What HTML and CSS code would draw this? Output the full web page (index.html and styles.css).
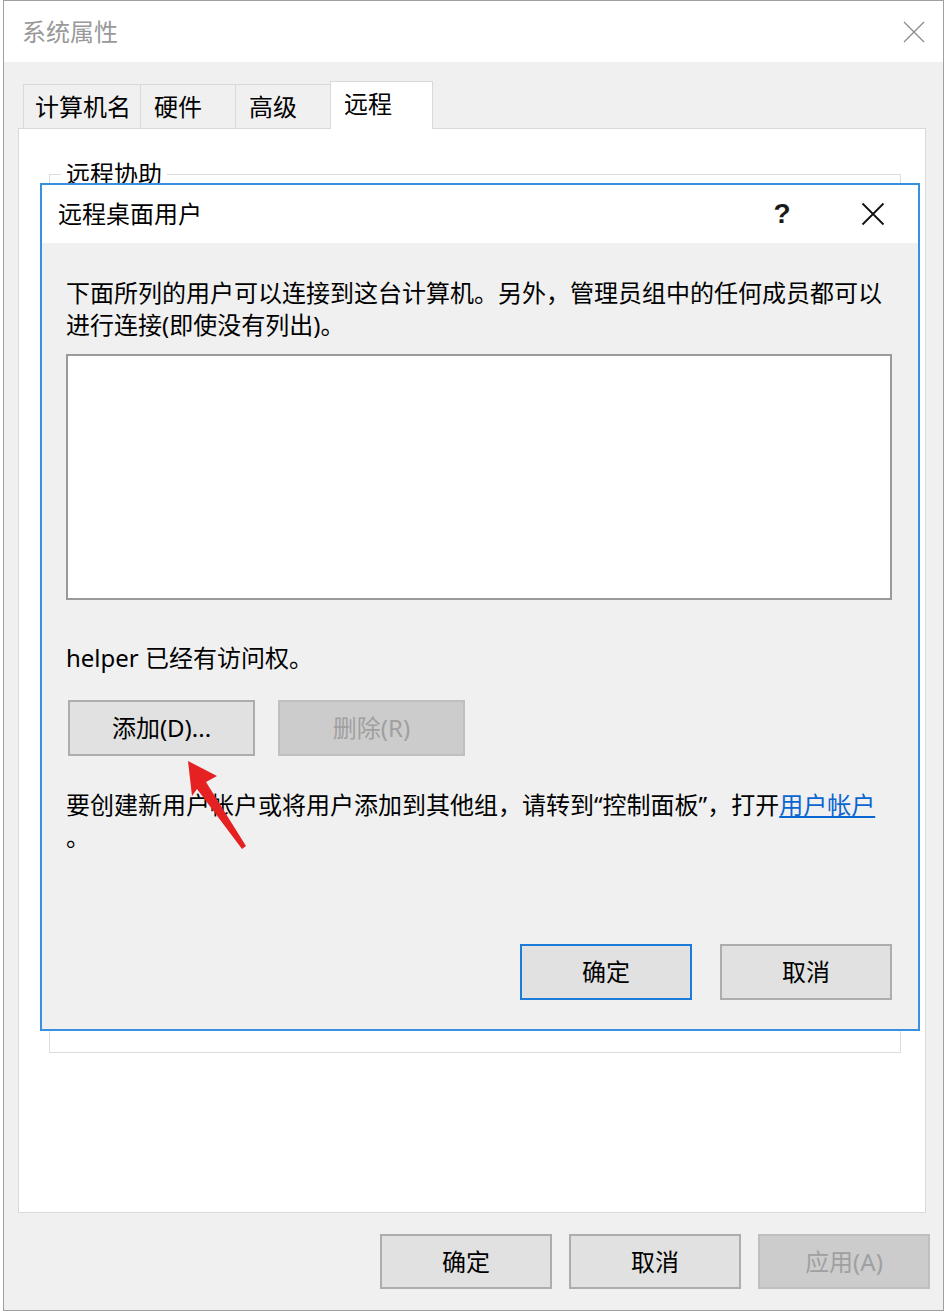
FILE: index.html
```html
<!DOCTYPE html>
<html lang="zh-CN">
<head>
<meta charset="utf-8">
<title>系统属性</title>
<link rel="stylesheet" href="styles.css">
</head>
<body>
<div class="window">
  <div class="titlebar">
    <span class="title">系统属性</span>
    <span class="tb-close">
      <svg width="22" height="22" viewBox="0 0 22 22"><path d="M1 1 L21 21 M21 1 L1 21" stroke="#8c8c8c" stroke-width="1.3" fill="none"/></svg>
    </span>
  </div>
  <div class="client">
    <div class="tabs">
      <div class="tab">计算机名</div>
      <div class="tab">硬件</div>
      <div class="tab">高级</div>
      <div class="tab active">远程</div>
    </div>
    <div class="panel">
      <fieldset class="group"><legend>远程协助</legend></fieldset>
    </div>
    <div class="actions">
      <button class="btn wide">确定</button>
      <button class="btn wide">取消</button>
      <button class="btn wide disabled">应用(A)</button>
    </div>
  </div>
</div>

<div class="dialog">
  <div class="dlg-titlebar">
    <span class="dlg-title">远程桌面用户</span>
    <span class="dlg-help">?</span>
    <span class="dlg-close">
      <svg width="24" height="24" viewBox="0 0 24 24"><path d="M1.5 1.5 L22.5 22.5 M22.5 1.5 L1.5 22.5" stroke="#111" stroke-width="1.8" fill="none"/></svg>
    </span>
  </div>
  <div class="dlg-body">
    <p class="text">下面所列的用户可以连接到这台计算机。另外，管理员组中的任何成员都可以<br>进行连接(即使没有列出)。</p>
    <div class="listbox"></div>
    <p class="text access">helper 已经有访问权。</p>
    <div class="btn-row">
      <button class="btn mid">添加(D)...</button>
      <button class="btn mid disabled">删除(R)</button>
    </div>
    <p class="text hint">要创建新用户帐户或将用户添加到其他组，请转到“控制面板”，打开<a class="link" href="#">用户帐户</a><br>。</p>
    <div class="dlg-actions">
      <button class="btn wide default">确定</button>
      <button class="btn wide">取消</button>
    </div>
  </div>
</div>

<svg class="arrow" width="946" height="1312" viewBox="0 0 946 1312">
  <polygon points="188,761 217,776 206,782 246,846 242,849 197,789 192,796" fill="#e52121"/>
</svg>
</body>
</html>
```

FILE: styles.css
```css
html, body {
  margin: 0;
  padding: 0;
  background: #ffffff;
}

body {
  width: 946px;
  height: 1312px;
  overflow: hidden;
  font-family: "Noto Sans", "Noto Sans CJK SC", sans-serif;
  font-size: 24px;
  color: #000;
  position: relative;
}

.window {
  margin-left: 3px;
  width: 941px;
  height: 1311px;
  box-sizing: border-box;
  border: 1px solid #a0a0a0;
  background: #f0f0f0;
  display: flex;
  flex-direction: column;
  overflow: hidden;
}

.titlebar {
  height: 61px;
  background: #ffffff;
  display: flex;
  align-items: center;
  padding-left: 18px;
  flex: none;
}

.title {
  color: #999999;
  line-height: 1;
  flex: 1;
}

.tb-close {
  width: 58px;
  display: flex;
  justify-content: center;
  align-items: center;
}

.client {
  padding: 19px 13px 0 14px;
  display: flex;
  flex-direction: column;
}

.tabs {
  display: flex;
  align-items: flex-end;
  height: 47px;
  margin-left: 5px;
}

.tab {
  box-sizing: border-box;
  height: 44px;
  min-width: 97px;
  padding: 0 9px 0 11px;
  border: 1px solid #d9d9d9;
  border-bottom: none;
  background: #f0f0f0;
  display: flex;
  align-items: center;
  line-height: 1;
  margin-right: -1px;
}

.tab:nth-child(2),
.tab:nth-child(3) {
  padding-left: 13px;
  min-width: 96px;
}

.tab.active {
  height: 48px;
  min-width: 103px;
  padding-left: 13px;
  padding-bottom: 4px;
  background: #ffffff;
  margin-bottom: -1px;
  position: relative;
  z-index: 1;
}

.panel {
  box-sizing: border-box;
  height: 1085px;
  margin-right: 4px;
  background: #ffffff;
  border: 1px solid #d9d9d9;
  padding-top: 33px;
  padding-left: 30px;
}

.group {
  box-sizing: border-box;
  width: 852px;
  height: 891px;
  margin: 0;
  padding: 0 0 0 11px;
  border: 1px solid #dcdcdc;
}

.group legend {
  padding: 0 5px;
  line-height: 24px;
  font-size: 24px;
}

.actions {
  margin-top: 21px;
  display: flex;
  justify-content: flex-end;
  gap: 17px;
}

.btn {
  box-sizing: border-box;
  font-family: "Noto Sans", "Noto Sans CJK SC", sans-serif;
  font-size: 24px;
  line-height: 1;
  color: #000;
  background: #e1e1e1;
  border: 2px solid #adadad;
  border-radius: 0;
  padding: 0;
  display: flex;
  align-items: center;
  justify-content: center;
}

.btn.wide {
  width: 172px;
  height: 55px;
}

.btn.mid {
  width: 187px;
  height: 56px;
}

.btn.disabled {
  background: #cccccc;
  border-color: #bfbfbf;
  color: #a0a0a0;
}

.btn.default {
  border-color: #1a7bd9;
}

/* dialog */
.dialog {
  position: absolute;
  left: 40px;
  top: 183px;
  width: 880px;
  height: 848px;
  box-sizing: border-box;
  border: 2px solid #3a90e0;
  background: #f0f0f0;
  display: flex;
  flex-direction: column;
  z-index: 5;
}

.dlg-titlebar {
  height: 58px;
  flex: none;
  background: #ffffff;
  display: flex;
  align-items: center;
  padding-left: 16px;
}

.dlg-title {
  flex: 1;
  line-height: 1;
}

.dlg-help {
  width: 90px;
  text-align: center;
  font-family: "Liberation Sans", "Noto Sans", sans-serif;
  font-size: 28px;
  font-weight: bold;
  color: #1a1a1a;
  line-height: 1;
}

.dlg-close {
  width: 91px;
  display: flex;
  justify-content: center;
  align-items: center;
}

.dlg-body {
  flex: 1;
  display: flex;
  flex-direction: column;
  padding: 34px 26px 0 24px;
}

.text {
  margin: 0;
  line-height: 32px;
}

.listbox {
  margin-top: 13px;
  height: 246px;
  box-sizing: border-box;
  border: 2px solid #9a9a9a;
  background: #ffffff;
}

.access {
  margin-top: 42px;
}

.btn-row {
  margin-top: 26px;
  margin-left: 2px;
  display: flex;
  gap: 23px;
}

.hint {
  margin-top: 33px;
}

.link {
  color: #0a66d0;
  text-decoration: underline;
}

.dlg-actions {
  margin-top: auto;
  padding-bottom: 29px;
  display: flex;
  justify-content: flex-end;
  gap: 28px;
}

.dlg-actions .btn.wide {
  height: 56px;
}

.arrow {
  position: absolute;
  left: 0;
  top: 0;
  z-index: 10;
  pointer-events: none;
}
```
